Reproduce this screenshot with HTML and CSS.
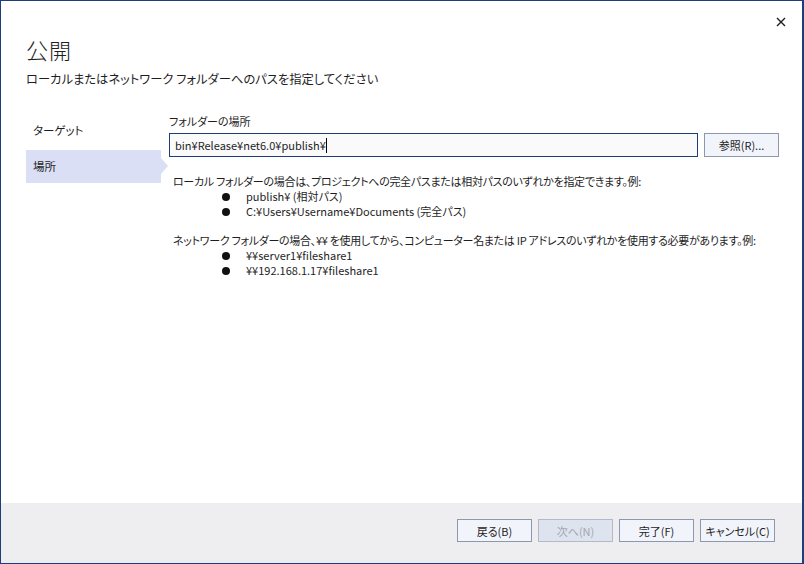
FILE: index.html
```html
<!DOCTYPE html>
<html lang="ja">
<head>
<meta charset="utf-8">
<title>公開</title>
<link rel="stylesheet" href="styles.css">
</head>
<body>
<div class="window">
  <button class="close" aria-label="閉じる">
    <svg width="10" height="10" viewBox="0 0 10 10"><path d="M1 1 L9 9 M9 1 L1 9" stroke="#1e1e1e" stroke-width="1.4" fill="none"/></svg>
  </button>
  <header class="head">
    <h1 class="title">公開</h1>
    <p class="subtitle">ローカルまたはネットワーク フォルダーへのパスを指定してください</p>
  </header>
  <main class="main">
    <nav class="nav">
      <div class="nav-item">ターゲット</div>
      <div class="nav-item selected">場所</div>
    </nav>
    <section class="content">
      <label class="field-label">フォルダーの場所</label>
      <div class="field-row">
        <div class="input">bin¥Release¥net6.0¥publish¥<span class="caret"></span></div>
        <button class="btn">参照(R)...</button>
      </div>
      <div class="desc">
        <p class="line">ローカル フォルダーの場合は、プロジェクトへの完全パスまたは相対パスのいずれかを指定できます。例:</p>
        <ul class="bullets">
          <li>publish¥ (相対パス)</li>
          <li>C:¥Users¥Username¥Documents (完全パス)</li>
        </ul>
        <p class="line gap">ネットワーク フォルダーの場合、¥¥ を使用してから、コンピューター名または IP アドレスのいずれかを使用する必要があります。例:</p>
        <ul class="bullets">
          <li>¥¥server1¥fileshare1</li>
          <li>¥¥192.168.1.17¥fileshare1</li>
        </ul>
      </div>
    </section>
  </main>
  <footer class="foot">
    <button class="btn">戻る(B)</button>
    <button class="btn disabled">次へ(N)</button>
    <button class="btn">完了(F)</button>
    <button class="btn">キャンセル(C)</button>
  </footer>
</div>
</body>
</html>
```

FILE: styles.css
```css
* { box-sizing: border-box; }
html, body { margin: 0; padding: 0; }
body {
  width: 804px;
  height: 564px;
  font-family: "Noto Sans CJK JP", "Noto Sans", sans-serif;
  font-feature-settings: "palt";
  font-size: 11px;
  color: #1e1e1e;
  background: #fff;
}
.window {
  position: relative;
  width: 804px;
  height: 564px;
  border: 1px solid #1f3d7a;
  border-right-width: 2px;
  display: flex;
  flex-direction: column;
  background: #fff;
}
.close {
  position: absolute;
  top: 14px;
  right: 14px;
  width: 14px;
  height: 14px;
  padding: 0;
  border: 0;
  background: transparent;
  display: flex;
  align-items: center;
  justify-content: center;
}
.head {
  padding: 33px 0 0 25px;
  height: 112px;
}
.title {
  margin: 0;
  font-size: 22px;
  font-weight: 300;
  line-height: 30px;
  letter-spacing: 1px;
}
.subtitle {
  margin: 5px 0 0;
  font-size: 12.3px;
  line-height: 20px;
}
.main {
  flex: 1;
  display: flex;
  padding-left: 25px;
}
.nav {
  width: 135px;
  display: flex;
  flex-direction: column;
  gap: 3px;
  padding-top: 1px;
  font-size: 11.5px;
}
.nav-item {
  position: relative;
  height: 33px;
  line-height: 33px;
  padding-left: 7px;
}
.nav-item.selected { background: #dadff6; }
.nav-item.selected::after {
  content: "";
  position: absolute;
  right: -7px;
  top: 8px;
  border-top: 8.5px solid transparent;
  border-bottom: 8.5px solid transparent;
  border-left: 7px solid #dadff6;
}
.content {
  margin-left: 8px;
  width: 610px;
  display: flex;
  flex-direction: column;
}
.field-label {
  line-height: 16px;
  height: 20px;
}
.field-row {
  display: flex;
  gap: 6px;
}
.input {
  width: 529px;
  height: 24px;
  border: 1px solid #1f3d7a;
  background: #fafafb;
  padding: 0 5px;
  line-height: 22px;
  display: flex;
  align-items: center;
}
.caret {
  display: inline-block;
  width: 1px;
  height: 15px;
  background: #000;
}
.btn {
  width: 75px;
  height: 24px;
  border: 1px solid #8d98b0;
  background: #f2f4fc;
  font-family: inherit;
  font-feature-settings: "palt";
  font-size: 11px;
  color: #1e1e1e;
  padding: 0;
}
.desc {
  padding: 17px 0 0 4px;
  white-space: nowrap;
}
.line {
  margin: 0;
  line-height: 15px;
  letter-spacing: -0.3px;
}
.line.gap { margin-top: 14px; }
.bullets {
  list-style: none;
  margin: 0;
  padding: 0 0 0 49px;
}
.bullets li {
  position: relative;
  line-height: 15px;
  padding-left: 24px;
}
.bullets li::before {
  content: "";
  position: absolute;
  left: 0;
  top: 3.5px;
  width: 8px;
  height: 8px;
  border-radius: 50%;
  background: #111;
}
.foot {
  height: 60px;
  background: #eeeef1;
  display: flex;
  justify-content: flex-end;
  align-items: flex-start;
  gap: 6px;
  padding: 16px 27px 0 0;
}
.foot .btn { height: 23px; }
.btn.disabled {
  background: #dee3f0;
  border-color: #b3b9c6;
  color: #a3a6ae;
}
```
